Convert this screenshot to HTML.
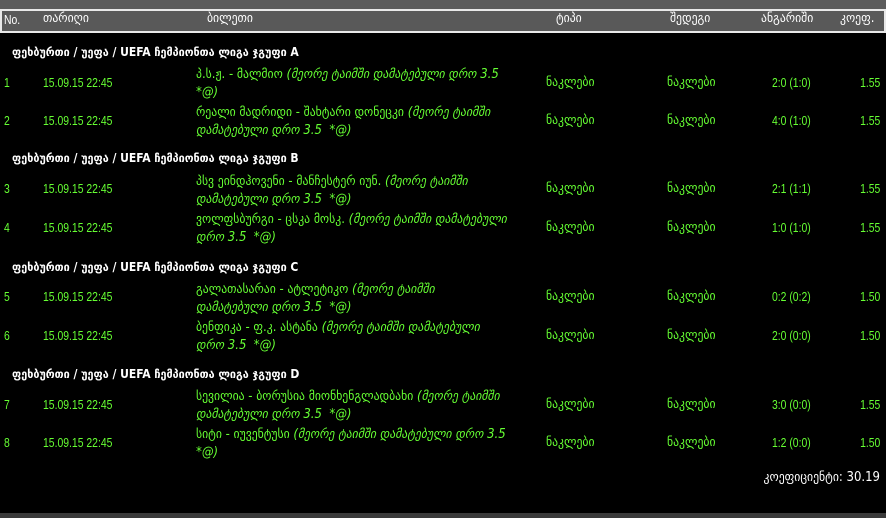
<!DOCTYPE html>
<html><head><meta charset="utf-8"><style>
body{margin:0;width:886px;height:518px;background:#000;overflow:hidden;font-family:"DejaVu Sans Condensed","DejaVu Sans","Liberation Sans",sans-serif;font-size:13px;color:#6f3;position:relative}
.top{position:absolute;left:0;top:0;width:886px;height:9px;background:#5c5c5c}
.hd{position:absolute;left:0;top:9px;width:882px;height:20px;background:#595959;border:2px solid #e8e8e8;color:#fff}
.bot{position:absolute;left:0;top:513px;width:886px;height:5px;background:#3a3a3a}
.a{position:absolute;white-space:nowrap}
.w{color:#fff}
.g{color:#fff;font-weight:bold;font-size:12px}
.n{font-family:"Liberation Sans",sans-serif;font-size:13px;transform:scaleX(0.8);transform-origin:left center}
.r{transform-origin:right center}
span.n{display:inline-block}
i{font-style:italic}
.b{position:absolute;left:196px;width:312px;line-height:18px;white-space:normal}
</style></head><body>
<div class="top"></div>
<div class="hd"></div>
<div class="a w n" style="left:4px;top:12px">No.</div>
<div class="a w" style="left:43px;top:11px">თარიღი</div>
<div class="a w" style="left:207px;top:11px">ბილეთი</div>
<div class="a w" style="left:556px;top:11px">ტიპი</div>
<div class="a w" style="left:670px;top:11px">შედეგი</div>
<div class="a w" style="left:761px;top:11px">ანგარიში</div>
<div class="a w" style="left:840px;top:11px">კოეფ.</div>

<div class="a g" style="left:12px;top:45px">ფეხბურთი / უეფა / UEFA ჩემპიონთა ლიგა ჯგუფი A</div>
<div class="a g" style="left:12px;top:151px">ფეხბურთი / უეფა / UEFA ჩემპიონთა ლიგა ჯგუფი B</div>
<div class="a g" style="left:12px;top:260px">ფეხბურთი / უეფა / UEFA ჩემპიონთა ლიგა ჯგუფი C</div>
<div class="a g" style="left:12px;top:367px">ფეხბურთი / უეფა / UEFA ჩემპიონთა ლიგა ჯგუფი D</div>

<div class="a n" style="left:4px;top:75px">1</div><div class="a n" style="left:43px;top:75px">15.09.15 22:45</div>
<div class="b" style="top:66px">პ.ს.ჟ. - მალმიო <i>(მეორე ტაიმში დამატებული დრო 3.5 *@)</i></div>
<div class="a" style="left:546px;top:75px">ნაკლები</div><div class="a" style="left:667px;top:75px">ნაკლები</div>
<div class="a n" style="left:772px;top:75px">2:0 (1:0)</div><div class="a n r" style="right:6px;top:75px">1.55</div>

<div class="a n" style="left:4px;top:113px">2</div><div class="a n" style="left:43px;top:113px">15.09.15 22:45</div>
<div class="b" style="top:104px">რეალი მადრიდი - შახტარი დონეცკი <i>(მეორე ტაიმში დამატებული დრო 3.5 &nbsp;*@)</i></div>
<div class="a" style="left:546px;top:113px">ნაკლები</div><div class="a" style="left:667px;top:113px">ნაკლები</div>
<div class="a n" style="left:772px;top:113px">4:0 (1:0)</div><div class="a n r" style="right:6px;top:113px">1.55</div>

<div class="a n" style="left:4px;top:181px">3</div><div class="a n" style="left:43px;top:181px">15.09.15 22:45</div>
<div class="b" style="top:173px">პსვ ეინდჰოვენი - მანჩესტერ იუნ. <i>(მეორე ტაიმში დამატებული დრო 3.5 &nbsp;*@)</i></div>
<div class="a" style="left:546px;top:181px">ნაკლები</div><div class="a" style="left:667px;top:181px">ნაკლები</div>
<div class="a n" style="left:772px;top:181px">2:1 (1:1)</div><div class="a n r" style="right:6px;top:181px">1.55</div>

<div class="a n" style="left:4px;top:220px">4</div><div class="a n" style="left:43px;top:220px">15.09.15 22:45</div>
<div class="b" style="top:211px">ვოლფსბურგი - ცსკა მოსკ. <i>(მეორე ტაიმში დამატებული დრო 3.5 &nbsp;*@)</i></div>
<div class="a" style="left:546px;top:220px">ნაკლები</div><div class="a" style="left:667px;top:220px">ნაკლები</div>
<div class="a n" style="left:772px;top:220px">1:0 (1:0)</div><div class="a n r" style="right:6px;top:220px">1.55</div>

<div class="a n" style="left:4px;top:289px">5</div><div class="a n" style="left:43px;top:289px">15.09.15 22:45</div>
<div class="b" style="top:281px">გალათასარაი - ატლეტიკო <i>(მეორე ტაიმში დამატებული დრო 3.5 &nbsp;*@)</i></div>
<div class="a" style="left:546px;top:289px">ნაკლები</div><div class="a" style="left:667px;top:289px">ნაკლები</div>
<div class="a n" style="left:772px;top:289px">0:2 (0:2)</div><div class="a n r" style="right:6px;top:289px">1.50</div>

<div class="a n" style="left:4px;top:328px">6</div><div class="a n" style="left:43px;top:328px">15.09.15 22:45</div>
<div class="b" style="top:319px">ბენფიკა - ფ.კ. ასტანა <i>(მეორე ტაიმში დამატებული დრო 3.5 &nbsp;*@)</i></div>
<div class="a" style="left:546px;top:328px">ნაკლები</div><div class="a" style="left:667px;top:328px">ნაკლები</div>
<div class="a n" style="left:772px;top:328px">2:0 (0:0)</div><div class="a n r" style="right:6px;top:328px">1.50</div>

<div class="a n" style="left:4px;top:397px">7</div><div class="a n" style="left:43px;top:397px">15.09.15 22:45</div>
<div class="b" style="top:388px">სევილია - ბორუსია მიონხენგლადბახი <i>(მეორე ტაიმში დამატებული დრო 3.5 &nbsp;*@)</i></div>
<div class="a" style="left:546px;top:397px">ნაკლები</div><div class="a" style="left:667px;top:397px">ნაკლები</div>
<div class="a n" style="left:772px;top:397px">3:0 (0:0)</div><div class="a n r" style="right:6px;top:397px">1.55</div>

<div class="a n" style="left:4px;top:435px">8</div><div class="a n" style="left:43px;top:435px">15.09.15 22:45</div>
<div class="b" style="top:426px">სიტი - იუვენტუსი <i>(მეორე ტაიმში დამატებული დრო 3.5 *@)</i></div>
<div class="a" style="left:546px;top:435px">ნაკლები</div><div class="a" style="left:667px;top:435px">ნაკლები</div>
<div class="a n" style="left:772px;top:435px">1:2 (0:0)</div><div class="a n r" style="right:6px;top:435px">1.50</div>

<div class="a w" style="right:6px;top:470px">კოეფიციენტი: 30.19</div>
<div class="bot"></div>
</body></html>
